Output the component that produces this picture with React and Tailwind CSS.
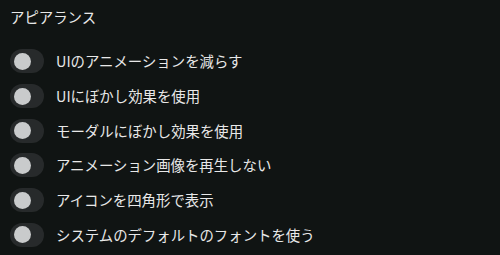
import React, { useState } from "react";

const items = [
  "UIのアニメーションを減らす",
  "UIにぼかし効果を使用",
  "モーダルにぼかし効果を使用",
  "アニメーション画像を再生しない",
  "アイコンを四角形で表示",
  "システムのデフォルトのフォントを使う",
];

const Toggle = ({ on, onClick }) => (
  <button
    onClick={onClick}
    className={`relative w-[34px] h-6 shrink-0 rounded-full ${on ? "bg-[#86b300]" : "bg-[#272a2b]"}`}
  >
    <span
      className={`absolute top-[3.5px] w-[17px] h-[17px] rounded-full bg-[#c9cbcc] ${on ? "left-[13.5px]" : "left-[3.5px]"}`}
    />
  </button>
);

const App = () => {
  const [state, setState] = useState(items.map(() => false));

  return (
    <div
      className="w-[500px] h-[255px] bg-[#101413] text-[#e8e8e8] px-[10px] pt-[7px] overflow-hidden"
      style={{ fontFamily: '"Noto Sans CJK JP", "Noto Sans", sans-serif' }}
    >
      <h2 className="text-[14.4px] leading-5 mb-[17px]">アピアランス</h2>
      <div className="flex flex-col">
        {items.map((label, i) => (
          <label key={i} className="flex items-center gap-[12px] h-[34.7px]">
            <Toggle
              on={state[i]}
              onClick={() => setState(state.map((v, j) => (j === i ? !v : v)))}
            />
            <span className="text-[14.4px] leading-5">{label}</span>
          </label>
        ))}
      </div>
    </div>
  );
};

export default App;
